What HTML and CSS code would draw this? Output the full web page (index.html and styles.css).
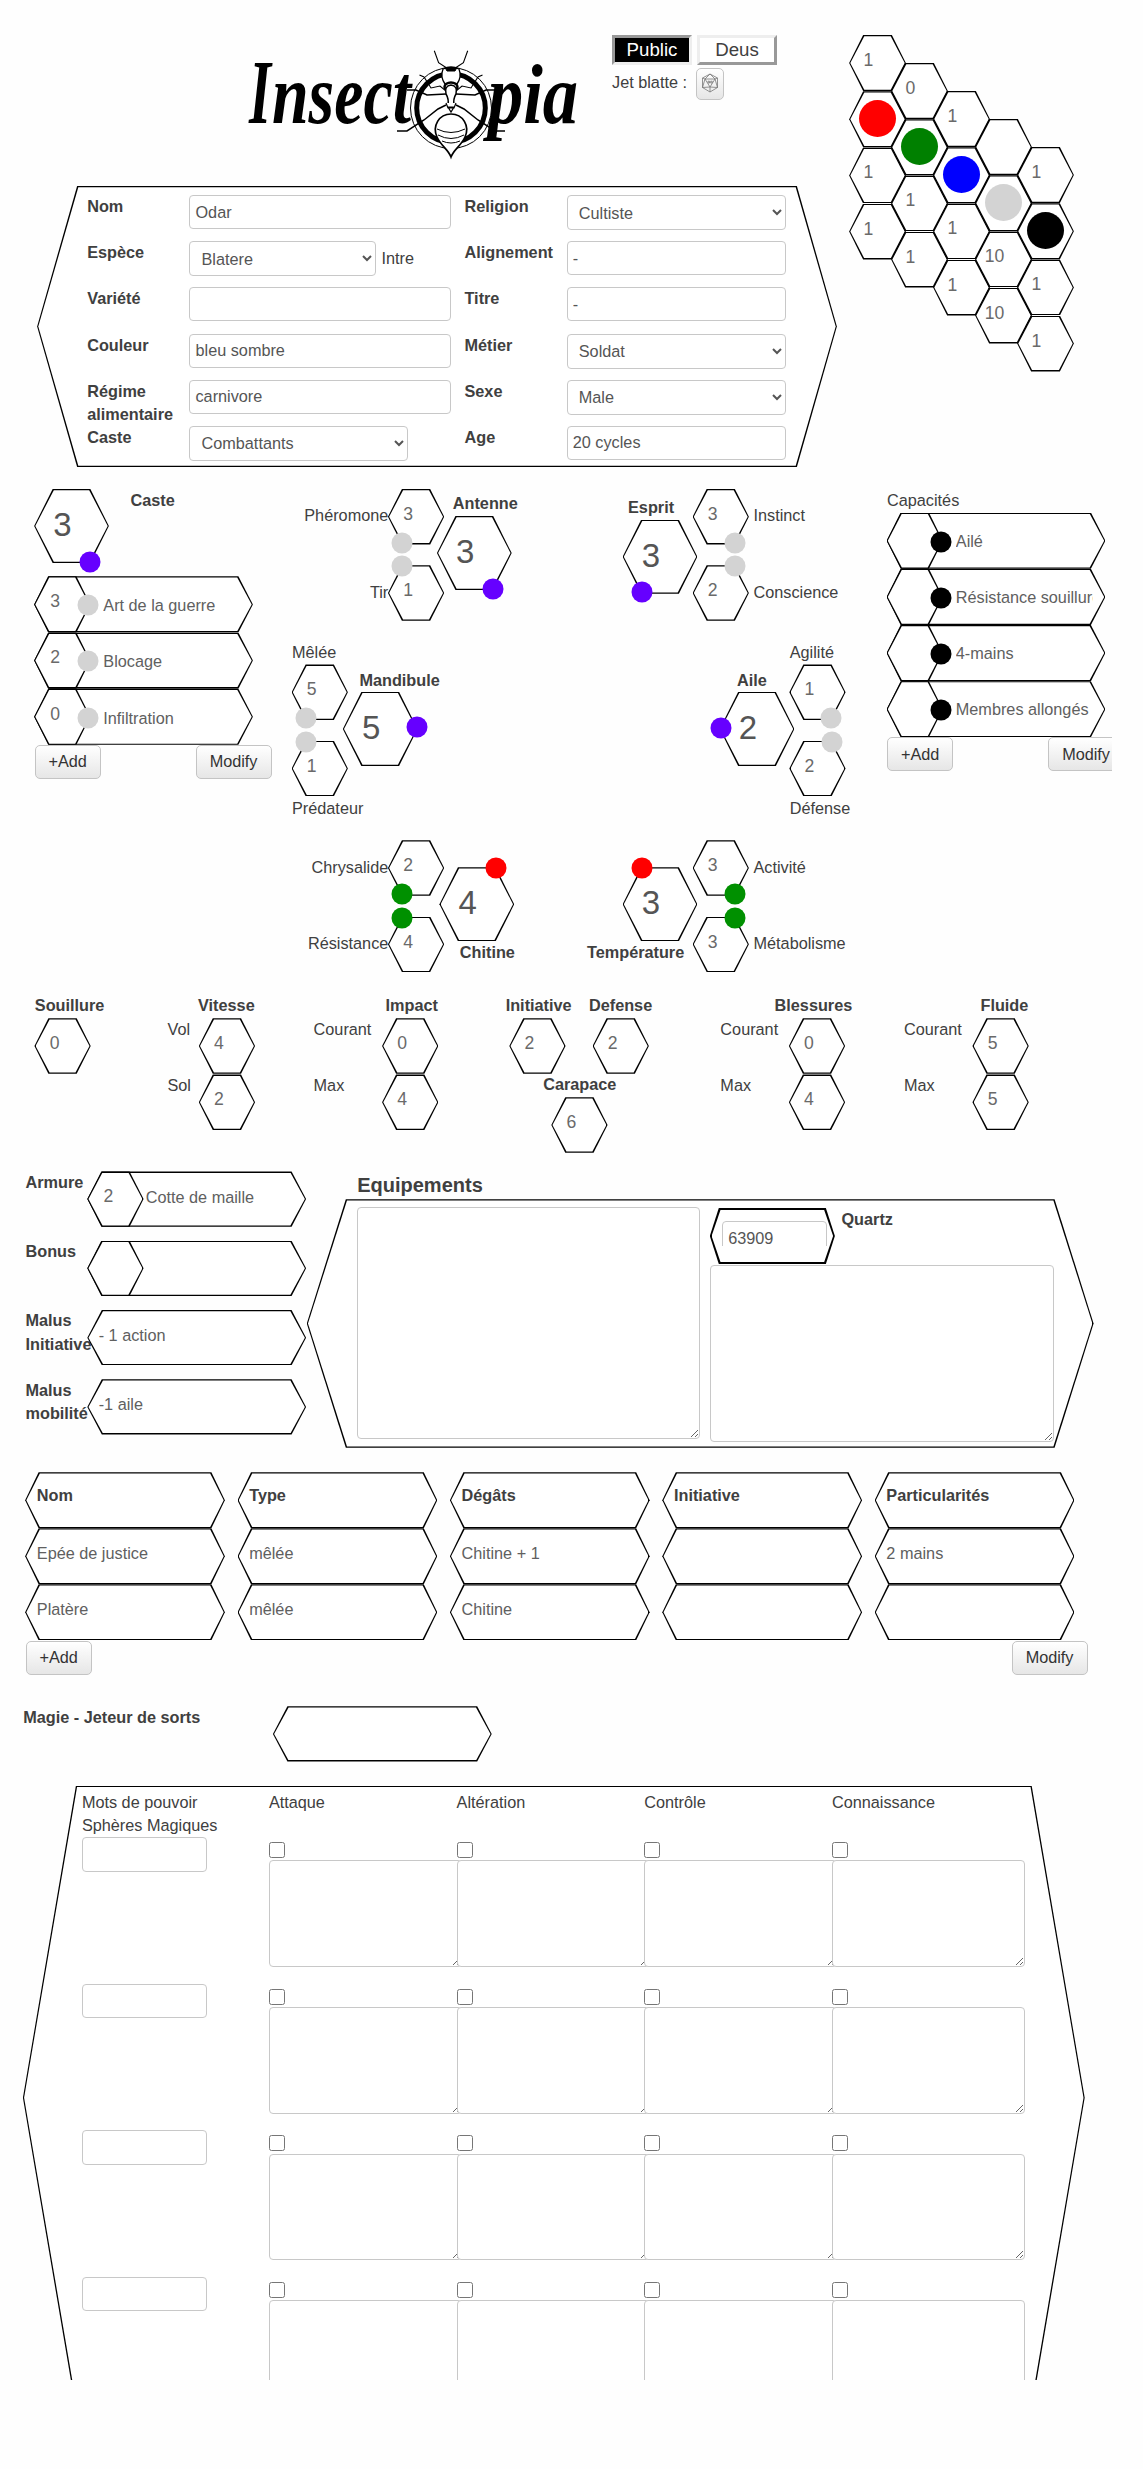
FILE: index.html
```html
<!DOCTYPE html>
<html lang="fr">
<head>
<meta charset="utf-8">
<title>Insectopia - Odar</title>
<link rel="stylesheet" href="styles.css">
</head>
<body>
<main class="sheet">

  <section class="top">
    <div class="top-left">
      <header class="header">
        <svg class="logo" viewBox="240 45 345 120" role="img" aria-label="Insectopia">
          <g class="logo-text">
            <text x="249" y="123" font-size="92" textLength="22" lengthAdjust="spacingAndGlyphs">I</text>
            <text x="272" y="123" font-size="84" textLength="139" lengthAdjust="spacingAndGlyphs">nsect</text>
            <text x="488" y="123" font-size="84" textLength="90" lengthAdjust="spacingAndGlyphs">pia</text>
          </g>
          <circle cx="451" cy="108" r="40.5" fill="#fff" stroke="#000" stroke-width="1"/>
          <circle cx="451" cy="108" r="34.3" fill="#fff" stroke="#000" stroke-width="5"/>
          <g fill="none" stroke="#000" stroke-width="1.1">
            <path d="M434.3 50.7L438.6 62.7L447.5 68.5M467.7 50.7L463.4 62.7L454.5 68.5"/>
            <path d="M446 91L440 86L431 88L424 77L419.5 75M456 91L462 86L471 88L478 77L482.5 75"/>
            <path stroke-width="1.5" d="M446 94L427 95L416 90L407 90M456 94L475 95L486 90L495 90"/>
            <path stroke-width="1.5" d="M446 105L438 109L424 120L407 131L397 131M456 105L464 109L478 120L495 131L505 131"/>
          </g>
          <g fill="#fff" stroke="#000">
            <path d="M443 69Q451 65 459 69Q462 77 457 84H445Q440 77 443 69Z" stroke-width="1.3"/>
            <path d="M445 67.5H457L455 71H447Z" fill="#000"/>
            <ellipse cx="451" cy="87" rx="6.5" ry="4.5" stroke-width="2.5"/>
            <path d="M451 85Q458 86 456 94Q453 99 454 105H448Q449 99 446 94Q444 86 451 85Z" stroke-width="1.5"/>
            <path d="M446 103L448 108H454L456 103M448 107H454L451 112Z" stroke-width="1.2"/>
            <path d="M451 114C463 114 470 126 465 137C461 146 454 149 451 157C448 149 441 146 437 137C432 126 439 114 451 114Z" stroke-width="1.7"/>
            <path d="M437 129Q451 136 465 129M438 135Q451 142 464 135M442 141Q451 145 460 141" fill="none" stroke-width="1"/>
          </g>
        </svg>
        <div class="tabs">
          <div class="tab-row">
            <button class="tab tab-on">Public</button>
            <button class="tab">Deus</button>
          </div>
          <div class="roll">
            <span>Jet blatte :</span>
            <button class="btn dice" aria-label="Jet blatte">
              <svg width="18" height="20" viewBox="0 0 18 20" fill="none" stroke="#777" stroke-width=".8">
                <path d="M9 1L16.5 5V14.5L9 19L1.500 14.500V5ZM4 6H14L9 14ZM1.500 5L4 6L9 1L14 6L16.500 5M4 6L1.500 14.500L9 14L16.500 14.500L14 6M9 14V19"/>
                <path d="M7 10V8.200H8.500V10ZM9.700 10V8.200H11.200V10Z"/>
              </svg>
            </button>
          </div>
        </div>
      </header>

      <div class="shape identity">
        <label>Nom</label><input value="Odar">
        <label>Religion</label><select class="w219"><option>Cultiste</option></select>
        <label>Espèce</label><div class="with-note"><select class="w187"><option>Blatere</option></select><span>Intre</span></div>
        <label>Alignement</label><input value="-">
        <label>Variété</label><input value="">
        <label>Titre</label><input value="-">
        <label>Couleur</label><input value="bleu sombre">
        <label>Métier</label><select class="w219"><option>Soldat</option></select>
        <label>Régime alimentaire</label><input value="carnivore">
        <label>Sexe</label><select class="w219"><option>Male</option></select>
        <label>Caste</label><select class="w219"><option>Combattants</option></select>
        <label>Age</label><input value="20 cycles">
      </div>
    </div>

    <div class="comb">
      <div class="comb-col">
        <div class="shape hex">1</div><div class="shape hex"><i class="disc red"></i></div><div class="shape hex">1</div><div class="shape hex">1</div>
      </div>
      <div class="comb-col">
        <div class="shape hex">0</div><div class="shape hex"><i class="disc green"></i></div><div class="shape hex">1</div><div class="shape hex">1</div>
      </div>
      <div class="comb-col">
        <div class="shape hex">1</div><div class="shape hex"><i class="disc blue"></i></div><div class="shape hex">1</div><div class="shape hex">1</div>
      </div>
      <div class="comb-col">
        <div class="shape hex"></div><div class="shape hex"><i class="disc gray"></i></div><div class="shape hex">10</div><div class="shape hex">10</div>
      </div>
      <div class="comb-col">
        <div class="shape hex">1</div><div class="shape hex"><i class="disc black"></i></div><div class="shape hex">1</div><div class="shape hex">1</div>
      </div>
    </div>
  </section>

  <section class="stats">
    <div class="skills">
      <div class="skills-head">
        <div class="shape hex big">3<i class="dot violet br"></i></div>
        <b>Caste</b>
      </div>
      <div class="shape plate"><div class="shape hex">3<i class="dot gray mid"></i></div><span>Art de la guerre</span></div>
      <div class="shape plate"><div class="shape hex">2<i class="dot gray mid"></i></div><span>Blocage</span></div>
      <div class="shape plate"><div class="shape hex">0<i class="dot gray mid"></i></div><span>Infiltration</span></div>
      <div class="actions"><button class="btn">+Add</button><button class="btn">Modify</button></div>
    </div>

    <div class="body-map">
      <div class="cluster antenne">
        <div class="side side-left"><span>Phéromone</span><span>Tir</span></div>
        <div class="pair">
          <div class="shape hex">3<i class="dot gray bl"></i></div>
          <div class="shape hex">1<i class="dot gray tl"></i></div>
        </div>
        <div class="core"><b>Antenne</b><div class="shape hex big">3<i class="dot violet br"></i></div></div>
      </div>
      <div class="cluster esprit">
        <div class="core"><b>Esprit</b><div class="shape hex big">3<i class="dot violet bl"></i></div></div>
        <div class="pair">
          <div class="shape hex">3<i class="dot gray br"></i></div>
          <div class="shape hex">2<i class="dot gray tr"></i></div>
        </div>
        <div class="side"><span>Instinct</span><span>Conscience</span></div>
      </div>
      <div class="cluster mandibule">
        <div class="pair">
          <span>Mêlée</span>
          <div class="shape hex">5<i class="dot gray bl"></i></div>
          <div class="shape hex">1<i class="dot gray tl"></i></div>
          <span>Prédateur</span>
        </div>
        <div class="core"><b>Mandibule</b><div class="shape hex big">5<i class="dot violet mr"></i></div></div>
      </div>
      <div class="cluster aile">
        <div class="core"><b>Aile</b><div class="shape hex big">2<i class="dot violet ml"></i></div></div>
        <div class="pair">
          <span>Agilité</span>
          <div class="shape hex">1<i class="dot gray br"></i></div>
          <div class="shape hex">2<i class="dot gray tr"></i></div>
          <span>Défense</span>
        </div>
      </div>
      <div class="cluster chitine">
        <div class="side side-left"><span>Chrysalide</span><span>Résistance</span></div>
        <div class="pair">
          <div class="shape hex">2<i class="dot leaf bl"></i></div>
          <div class="shape hex">4<i class="dot leaf tl"></i></div>
        </div>
        <div class="core"><div class="shape hex big">4<i class="dot red tr"></i></div><b>Chitine</b></div>
      </div>
      <div class="cluster temperature">
        <div class="core"><div class="shape hex big">3<i class="dot red tl"></i></div><b>Température</b></div>
        <div class="pair">
          <div class="shape hex">3<i class="dot leaf br"></i></div>
          <div class="shape hex">3<i class="dot leaf tr"></i></div>
        </div>
        <div class="side"><span>Activité</span><span>Métabolisme</span></div>
      </div>
    </div>

    <div class="powers">
      <div>Capacités</div>
      <div class="shape plate"><div class="shape hex"><i class="dot black mid"></i></div><span>Ailé</span></div>
      <div class="shape plate"><div class="shape hex"><i class="dot black mid"></i></div><span>Résistance souillure</span></div>
      <div class="shape plate"><div class="shape hex"><i class="dot black mid"></i></div><span>4-mains</span></div>
      <div class="shape plate"><div class="shape hex"><i class="dot black mid"></i></div><span>Membres allongés</span></div>
      <div class="actions"><button class="btn">+Add</button><button class="btn">Modify</button></div>
    </div>
  </section>

  <section class="gauges">
    <div class="gauge"><b>Souillure</b><div class="shape hex">0</div></div>
    <div class="gauge speed">
      <b>Vitesse</b>
      <div class="line"><span>Vol</span><div class="shape hex">4</div></div>
      <div class="line"><span>Sol</span><div class="shape hex">2</div></div>
    </div>
    <div class="gauge max">
      <b>Impact</b>
      <div class="line"><span>Courant</span><div class="shape hex">0</div></div>
      <div class="line"><span>Max</span><div class="shape hex">4</div></div>
    </div>
    <div class="defences">
      <div class="gauge"><b>Initiative</b><div class="shape hex">2</div></div>
      <div class="gauge"><b>Defense</b><div class="shape hex">2</div></div>
      <div class="gauge shell"><b>Carapace</b><div class="shape hex">6</div></div>
    </div>
    <div class="gauge max">
      <b class="wide">Blessures</b>
      <div class="line"><span>Courant</span><div class="shape hex">0</div></div>
      <div class="line"><span>Max</span><div class="shape hex">4</div></div>
    </div>
    <div class="gauge max">
      <b>Fluide</b>
      <div class="line"><span>Courant</span><div class="shape hex">5</div></div>
      <div class="line"><span>Max</span><div class="shape hex">5</div></div>
    </div>
  </section>

  <section class="gear">
    <div class="armour">
      <b>Armure</b><div class="shape plate"><div class="shape hex">2</div><span>Cotte de maille</span></div>
      <b>Bonus</b><div class="shape plate"><div class="shape hex"></div></div>
      <b>Malus Initiative</b><div class="shape plate plain">- 1 action</div>
      <b>Malus mobilité</b><div class="shape plate plain">-1 aile</div>
    </div>
    <div class="equipment">
      <h2>Equipements</h2>
      <div class="shape equipment-panel">
        <textarea class="items"></textarea>
        <div class="wealth">
          <div class="quartz-row">
            <div class="shape quartz"><div class="quartz-clip"><input value="63909"></div></div>
            <b>Quartz</b>
          </div>
          <textarea class="notes"></textarea>
        </div>
      </div>
    </div>
  </section>

  <section class="weapons">
    <div class="weapon-grid">
      <div class="shape cell head">Nom</div><div class="shape cell head">Type</div><div class="shape cell head">Dégâts</div><div class="shape cell head">Initiative</div><div class="shape cell head">Particularités</div>
      <div class="shape cell">Epée de justice</div><div class="shape cell">mêlée</div><div class="shape cell">Chitine + 1</div><div class="shape cell"></div><div class="shape cell">2 mains</div>
      <div class="shape cell">Platère</div><div class="shape cell">mêlée</div><div class="shape cell">Chitine</div><div class="shape cell"></div><div class="shape cell"></div>
    </div>
    <div class="actions"><button class="btn">+Add</button><button class="btn">Modify</button></div>
  </section>

  <section class="magic-head">
    <b>Magie - Jeteur de sorts</b>
    <div class="shape plate"></div>
  </section>

  <section class="shape magic">
    <div class="magic-row magic-titles">
      <div>Mots de pouvoir<br>Sphères Magiques</div><div>Attaque</div><div>Altération</div><div>Contrôle</div><div>Connaissance</div>
    </div>
    <div class="magic-row">
      <div><input></div>
      <div class="spell"><input type="checkbox"><textarea></textarea></div>
      <div class="spell"><input type="checkbox"><textarea></textarea></div>
      <div class="spell"><input type="checkbox"><textarea></textarea></div>
      <div class="spell"><input type="checkbox"><textarea></textarea></div>
    </div>
    <div class="magic-row">
      <div><input></div>
      <div class="spell"><input type="checkbox"><textarea></textarea></div>
      <div class="spell"><input type="checkbox"><textarea></textarea></div>
      <div class="spell"><input type="checkbox"><textarea></textarea></div>
      <div class="spell"><input type="checkbox"><textarea></textarea></div>
    </div>
    <div class="magic-row">
      <div><input></div>
      <div class="spell"><input type="checkbox"><textarea></textarea></div>
      <div class="spell"><input type="checkbox"><textarea></textarea></div>
      <div class="spell"><input type="checkbox"><textarea></textarea></div>
      <div class="spell"><input type="checkbox"><textarea></textarea></div>
    </div>
    <div class="magic-row">
      <div><input></div>
      <div class="spell"><input type="checkbox"><textarea></textarea></div>
      <div class="spell"><input type="checkbox"><textarea></textarea></div>
      <div class="spell"><input type="checkbox"><textarea></textarea></div>
      <div class="spell"><input type="checkbox"><textarea></textarea></div>
    </div>
  </section>
</main>
</body>
</html>
```
FILE: styles.css
```css
* { box-sizing: border-box; }

body {
  margin: 0;
  min-height: 2469px;
  background: #fefefe;
  color: #404040;
  font: 16.25px/23.4px "Liberation Sans", Arial, sans-serif;
}

.sheet {
  width: 1112px;
  height: 2380px;
  overflow: hidden;
}

/* form controls */
input, select, textarea {
  display: block;
  margin: 0;
  border: 1px solid #c8c8c8;
  border-radius: 4px;
  background: #fff;
  color: #555;
  font: inherit;
}
input:not([type="checkbox"]) { width: 100%; height: 34px; padding: 0 5px; }
select { height: 35px; padding: 0 5px 0 7px; }
.w219 { width: 219px; }
.w187 { width: 187px; }
input[type="checkbox"] { width: 16px; height: 16px; }

.btn {
  height: 34px;
  padding: 0 13px;
  border: 1px solid #c4c4c4;
  border-radius: 5px;
  background: linear-gradient(#fff, #e6e6e6);
  color: #333;
  font: inherit;
}
.actions { display: flex; justify-content: space-between; }

/* six-sided outlines: black layer with a white layer inset on top */
.shape {
  --notch: 14px;
  --line: 1.2px;
  position: relative;
  isolation: isolate;
}
.shape::before, .shape::after {
  content: "";
  position: absolute;
  z-index: -1;
  inset: 0 -.4px;
  background: #000;
  clip-path: polygon(var(--notch) 0, calc(100% - var(--notch)) 0, 100% 50%, calc(100% - var(--notch)) 100%, var(--notch) 100%, 0 50%);
}
.shape::after {
  inset: var(--line) calc(var(--line) - .4px);
  background: #fff;
}

.hex {
  flex: none;
  width: 55.5px;
  height: 55.5px;
  padding-right: 16px;
  color: #6a6a6a;
  font-size: 17.600px;
  line-height: 51px;
  text-align: center;
}
.big {
  --notch: 18.500px;
  width: 74px;
  height: 74px;
  padding-right: 18px;
  color: #555;
  font-size: 33px;
  line-height: 71px;
}

.red { background: #f00; }
.green { background: #008000; }
.leaf { background: #009000; }
.blue { background: #00f; }
.gray { background: #d3d3d3; }
.black { background: #000; }
.violet { background: #60f; }

/* coloured markers pinned on hexagon corners */
.dot {
  position: absolute;
  z-index: 1;
  width: 21px;
  height: 21px;
  border-radius: 50%;
  transform: translate(-50%, -50%);
}
.tl { left: 25%; top: 1px; }
.tr { left: 76%; top: 1px; }
.bl { left: 25%; top: calc(100% - 1.500px); }
.br { left: 75%; top: calc(100% - 1.500px); }
.mr { left: 100%; top: 35px; }
.ml { left: 1px; top: 36px; }
.mid { left: 53.700px; top: 29px; }

/* header and identity */
.top { display: flex; height: 489px; }
.top-left { width: 837.500px; }
.header { display: flex; height: 186px; padding: 35px 0 0 240px; }
.logo { width: 345px; height: 120px; margin-top: 10px; overflow: visible; }
.logo-text { font-family: "Liberation Serif", serif; font-weight: bold; font-style: italic; }
.tabs { margin-left: 27px; }
.tab-row { display: flex; gap: 5px; }
.tab {
  width: 80px;
  height: 30px;
  padding: 0;
  border: 3px solid;
  border-color: #eee #999 #999 #eee;
  background: #fff;
  color: #404040;
  font: 18.700px/22px "Liberation Sans", Arial, sans-serif;
}
.tab-on { border-color: #999 #eee #eee #999; background: #000; color: #fff; }
.roll { display: flex; padding-top: 3px; }
.roll span { width: 84px; padding-top: 3px; }
.dice { display: grid; place-items: center; width: 28px; height: 32px; padding: 0 0 3px; }

.identity {
  --notch: 40px;
  display: grid;
  grid-template-columns: 102.300px 262px 115.300px 219px;
  grid-template-rows: repeat(6, 46.200px);
  width: 799px;
  height: 281px;
  margin-left: 37.500px;
  padding: 9px 0 0 49.700px;
}
.identity > label { font-weight: bold; }
.identity > label:nth-of-type(even) { padding-left: 13px; }
.with-note { display: flex; gap: 5px; }
.with-note span { padding-top: 6px; }

.comb { display: flex; padding: 35px 0 0 12px; }
.comb-col { width: 42px; }
.comb .hex { width: 56px; height: 56px; margin-bottom: .2px; padding-right: 18px; }
.comb-col:nth-child(2) { margin-top: 28px; }
.comb-col:nth-child(3) { margin-top: 56px; }
.comb-col:nth-child(4) { margin-top: 84px; }
.comb-col:nth-child(5) { margin-top: 112px; }
.disc { display: block; width: 37px; height: 37px; margin-left: 9px; border-radius: 50%; transform: translateY(9px); }

/* attributes */
.stats { display: flex; height: 505.400px; padding-left: 34.500px; }
.skills { flex: none; width: 237px; }
.skills-head { display: flex; gap: 22px; height: 87.300px; }
.plate {
  --notch: 14.500px;
  display: flex;
  width: 218px;
  height: 56.200px;
}
.plate .hex { height: 100%; padding-right: 14px; }
.plate > span {
  width: 137px;
  margin-left: 13.300px;
  padding-top: 17.500px;
  overflow: hidden;
  color: #606060;
  white-space: nowrap;
}
.skills > .plate > span { padding-top: 18px; }

.body-map {
  display: grid;
  flex: none;
  grid-template-columns: 331px 284px;
  grid-template-rows: 152px 199.300px auto;
  width: 595px;
  margin-left: 20.500px;
}
.cluster { display: flex; align-items: flex-start; }
.side { display: flex; flex-direction: column; gap: 52.900px; padding: 15.400px 0 0 5px; }
.side-left { width: 96.300px; align-items: flex-end; padding-left: 0; }
.pair { display: flex; flex-direction: column; gap: 20.800px; width: 55.500px; }
.core { width: 74px; }
.core b { display: block; white-space: nowrap; }
.antenne .core { margin: 3px 0 0 -6.500px; }
.antenne b { padding: 0 0 .6px 15.500px; }
.esprit .core { margin-top: 6.700px; }
.esprit b { padding: 0 0 .6px 5px; }
.esprit .pair, .temperature .pair { margin-left: -4px; }
.mandibule .pair span, .aile .pair span { height: 23.400px; }
.mandibule .pair span:first-child, .aile .pair span:first-child { margin-bottom: -20.800px; }
.mandibule .pair span:last-child, .aile .pair span:last-child { margin-top: -20px; }
.mandibule .core { margin: 27.500px 0 0 -4.300px; }
.mandibule b { padding-left: 16.200px; }
.aile { padding-left: 97px; }
.aile .core { margin-top: 27.500px; }
.aile b { padding-left: 17px; }
.aile .pair { margin-left: -4.300px; }
.chitine .core { margin: 27px 0 0 -4px; }
.chitine b { padding-left: 20px; }
.temperature .core { margin-top: 27px; }
.temperature b { margin-left: -36px; }

.powers { flex: none; width: 237px; padding-top: .2px; }
.powers .plate > span { padding-top: 17px; }

/* derived values */
.gauges {
  display: grid;
  grid-template-columns: 132.700px 146.100px 192.100px 214.700px 183.600px 124px;
  height: 177px;
  padding-left: 34.800px;
}
.gauge > b { display: block; height: 23.900px; }
.line { display: flex; justify-content: space-between; height: 56.200px; }
.speed { width: 87.200px; }
.max { width: 124.400px; }
.speed b, .max b { text-align: right; }
.max .wide { margin-right: -7.500px; }
.defences { display: grid; grid-template-columns: 83.300px 83px; grid-template-rows: 79px 80px; }
.defences .hex { margin-left: 4px; }
.shell { grid-column: 1 / 3; padding-left: 37.500px; }
.defences .shell .hex { margin-left: 8.500px; }

/* armour and equipment */
.gear { display: flex; height: 300.900px; padding-left: 25.500px; }
.armour {
  display: grid;
  grid-template-columns: 62.200px 218px;
  grid-template-rows: repeat(4, 69.300px);
  width: 281.700px;
}
.armour b { margin-top: -.6px; }
.armour .plate { height: 55.300px; }
.armour .plate > span { margin-left: 2.500px; padding-top: 14.500px; }
.armour .plain { padding: 14px 0 0 11px; color: #606060; }
.equipment h2 { margin: 0; padding-left: 50px; height: 27.800px; font-size: 20px; line-height: 28px; }
.equipment-panel {
  --notch: 39px;
  display: flex;
  gap: 10.500px;
  width: 786px;
  height: 248.600px;
  padding: 8.300px 0 0 50px;
}
.items { width: 342.500px; height: 232px; }
.quartz-row { display: flex; height: 58px; gap: 7px; }
.quartz { --notch: 9px; --line: 1.800px; width: 124.300px; height: 56px; margin-top: .5px; padding: 13.500px 7px 0 12px; }
.quartz-clip { height: 24.400px; overflow: hidden; }
.quartz-row b { padding-top: .5px; }
.notes { width: 343.500px; height: 176.800px; }

/* weapons */
.weapons { height: 234px; padding-left: 25.500px; }
.weapon-grid { display: grid; grid-template-columns: repeat(5, 199px); column-gap: 13.400px; }
.cell { --notch: 13.500px; height: 56px; padding: 13.900px 0 0 11.300px; color: #606060; }
.head { padding-top: 11.300px; color: #404040; font-weight: bold; }
.weapons .actions { width: 1062px; padding-top: .9px; }

/* magic */
.magic-head { display: flex; height: 79.400px; padding-left: 23.300px; }
.magic-head b { width: 250px; margin-top: -.6px; }
.magic-head .plate { height: 55.300px; }
.magic { --notch: 53px; width: 1061px; height: 624px; margin-left: 23.300px; padding: 5px 0 0 58.600px; }
.magic-row { display: grid; grid-template-columns: 187px repeat(4, 187.700px); height: 146.600px; }
.magic-row.magic-titles { height: 46.500px; }
.magic-row > div:first-child input { width: 125px; height: 34.500px; }
.spell { padding-top: 5px; }
.spell input { margin-bottom: 2.300px; }
.spell textarea { position: relative; width: 193px; height: 106.800px; }
```
